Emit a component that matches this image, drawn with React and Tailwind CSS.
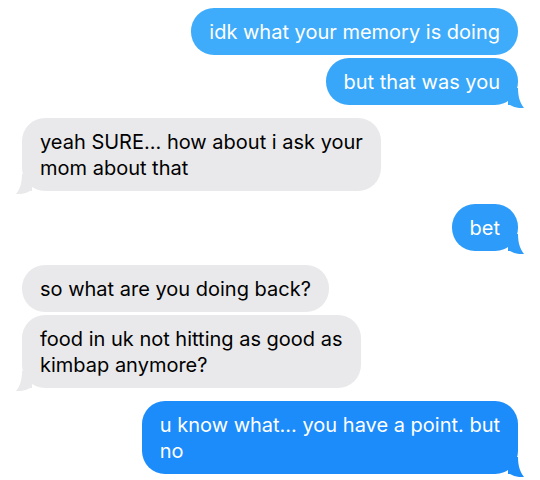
import React from "react";

const messages = [
  { me: true, lines: ["idk what your memory is doing"], color: "#3eacfa", gap: "mt-0" },
  { me: true, lines: ["but that was you"], color: "#39a7f9", tail: true, gap: "mt-[3px]" },
  { me: false, lines: ["yeah SURE... how about i ask your", "mom about that"], tail: true, gap: "mt-[13px]" },
  { me: true, lines: ["bet"], color: "#2c9bf9", tail: true, gap: "mt-[13px]" },
  { me: false, lines: ["so what are you doing back?"], gap: "mt-[14px]" },
  { me: false, lines: ["food in uk not hitting as good as", "kimbap anymore?"], tail: true, gap: "mt-[3px]" },
  { me: true, lines: ["u know what... you have a point. but", "no"], color: "#1c8cfb", tail: true, gap: "mt-[13px]" },
];

const Tail = ({ me, color }) => (
  <svg
    width="16"
    height="20"
    viewBox="0 0 16 20"
    className={me ? "absolute -right-[6px] -bottom-[3px]" : "absolute -left-[6px] -bottom-[3px] -scale-x-100"}
  >
    <path d="M0 0 L10 0 C10 9 12 15 16 20 C11 20.5 6 19.5 2 17 L0 17 Z" fill={color} />
  </svg>
);

const Bubble = ({ m }) => {
  const bg = m.me ? m.color : "#e9e9eb";
  return (
    <div className={`flex ${m.me ? "justify-end" : "justify-start"} ${m.gap}`}>
      <div
        className={`relative rounded-[23px] px-[18px] py-[10.5px] text-[20px] leading-[26px] whitespace-nowrap ${
          m.me ? "text-white" : "text-black"
        }`}
        style={{ backgroundColor: bg }}
      >
        {m.tail && <Tail me={m.me} color={bg} />}
        <div className="relative">
          {m.lines.map((l, i) => (
            <div key={i}>{l}</div>
          ))}
        </div>
      </div>
    </div>
  );
};

export default function App() {
  return (
    <div className="w-[540px] h-[480px] bg-white overflow-hidden px-[22px] pt-[8px] font-['Inter',Arial,sans-serif]">
      {messages.map((m, i) => (
        <Bubble key={i} m={m} />
      ))}
    </div>
  );
}
